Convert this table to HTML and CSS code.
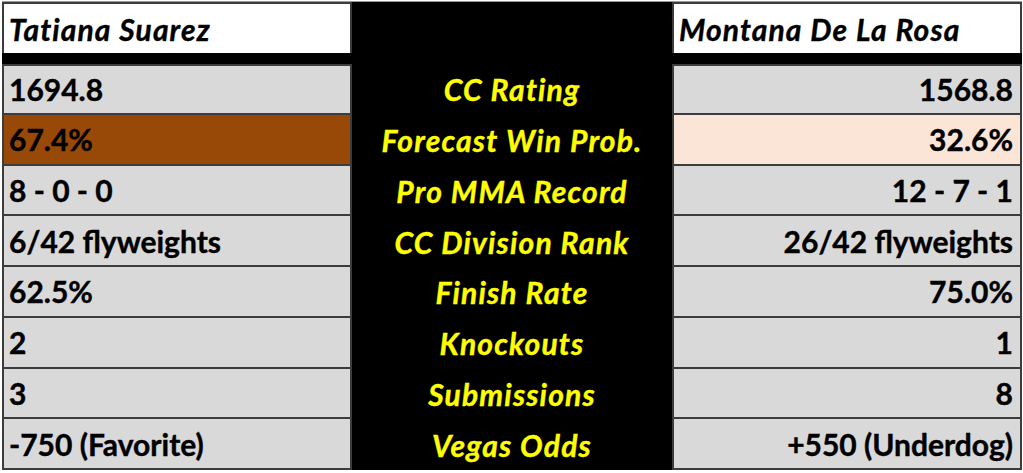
FILE: index.html
```html
<!DOCTYPE html>
<html lang="en">
<head>
<meta charset="utf-8">
<title>Tatiana Suarez vs Montana De La Rosa</title>
<link rel="stylesheet" href="styles.css">
</head>
<body>
<div class="board">
  <div class="name name-left">Tatiana Suarez</div>
  <div class="mid"></div>
  <div class="name name-right">Montana De La Rosa</div>
  <div class="gap"></div>

  <div class="val val-left first">1694.8</div>
  <div class="label">CC Rating</div>
  <div class="val val-right first">1568.8</div>

  <div class="val val-left fav">67.4%</div>
  <div class="label">Forecast Win Prob.</div>
  <div class="val val-right dog">32.6%</div>

  <div class="val val-left">8 - 0 - 0</div>
  <div class="label">Pro MMA Record</div>
  <div class="val val-right">12 - 7 - 1</div>

  <div class="val val-left">6/42 flyweights</div>
  <div class="label">CC Division Rank</div>
  <div class="val val-right">26/42 flyweights</div>

  <div class="val val-left">62.5%</div>
  <div class="label">Finish Rate</div>
  <div class="val val-right">75.0%</div>

  <div class="val val-left">2</div>
  <div class="label">Knockouts</div>
  <div class="val val-right">1</div>

  <div class="val val-left">3</div>
  <div class="label">Submissions</div>
  <div class="val val-right">8</div>

  <div class="val val-left">-750 (Favorite)</div>
  <div class="label">Vegas Odds</div>
  <div class="val val-right">+550 (Underdog)</div>
</div>
</body>
</html>
```
FILE: styles.css
```css
html, body {
  margin: 0;
  padding: 0;
  background: #ffffff;
}

body {
  padding: 1px 0 0 2px;
  font-family: Lato, "Open Sans", "Liberation Sans", sans-serif;
  font-weight: 700;
  color: #000;
}

.board {
  width: 1020px;
  display: grid;
  grid-template-columns: 350px 320px 350px;
  grid-template-rows: 51px 11px repeat(8, 50.75px);
  background: #000;
  border-top: 1px solid #9a9a9a;
}

.name {
  background: #fff;
  font-style: italic;
  font-size: 30px;
  letter-spacing: 1.1px;
  -webkit-text-stroke: 0.4px #000;
  display: flex;
  align-items: center;
  border: 2px solid #3c3c3c;
  border-bottom: none;
  padding: 0 5px;
  box-sizing: border-box;
}

.mid { background: #000; }

.gap {
  grid-column: 1 / 4;
  background: #000;
}

.val {
  background: #d9d9d9;
  font-size: 30px;
  -webkit-text-stroke: 0.4px #000;
  display: flex;
  align-items: center;
  border: 2px solid #3c3c3c;
  border-top: none;
  box-sizing: border-box;
  padding: 0 7px 0 5px;
}

.val.first { border-top: 2px solid #3c3c3c; }

.val-left { justify-content: flex-start; }
.val-right { justify-content: flex-end; }

.fav { background: #984807; }
.dog { background: #fbe5d6; }

.label {
  background: #000;
  color: #ffff00;
  font-style: italic;
  font-size: 30px;
  letter-spacing: 1.2px;
  -webkit-text-stroke: 0.4px #ffff00;
  display: flex;
  align-items: center;
  justify-content: center;
}
```
